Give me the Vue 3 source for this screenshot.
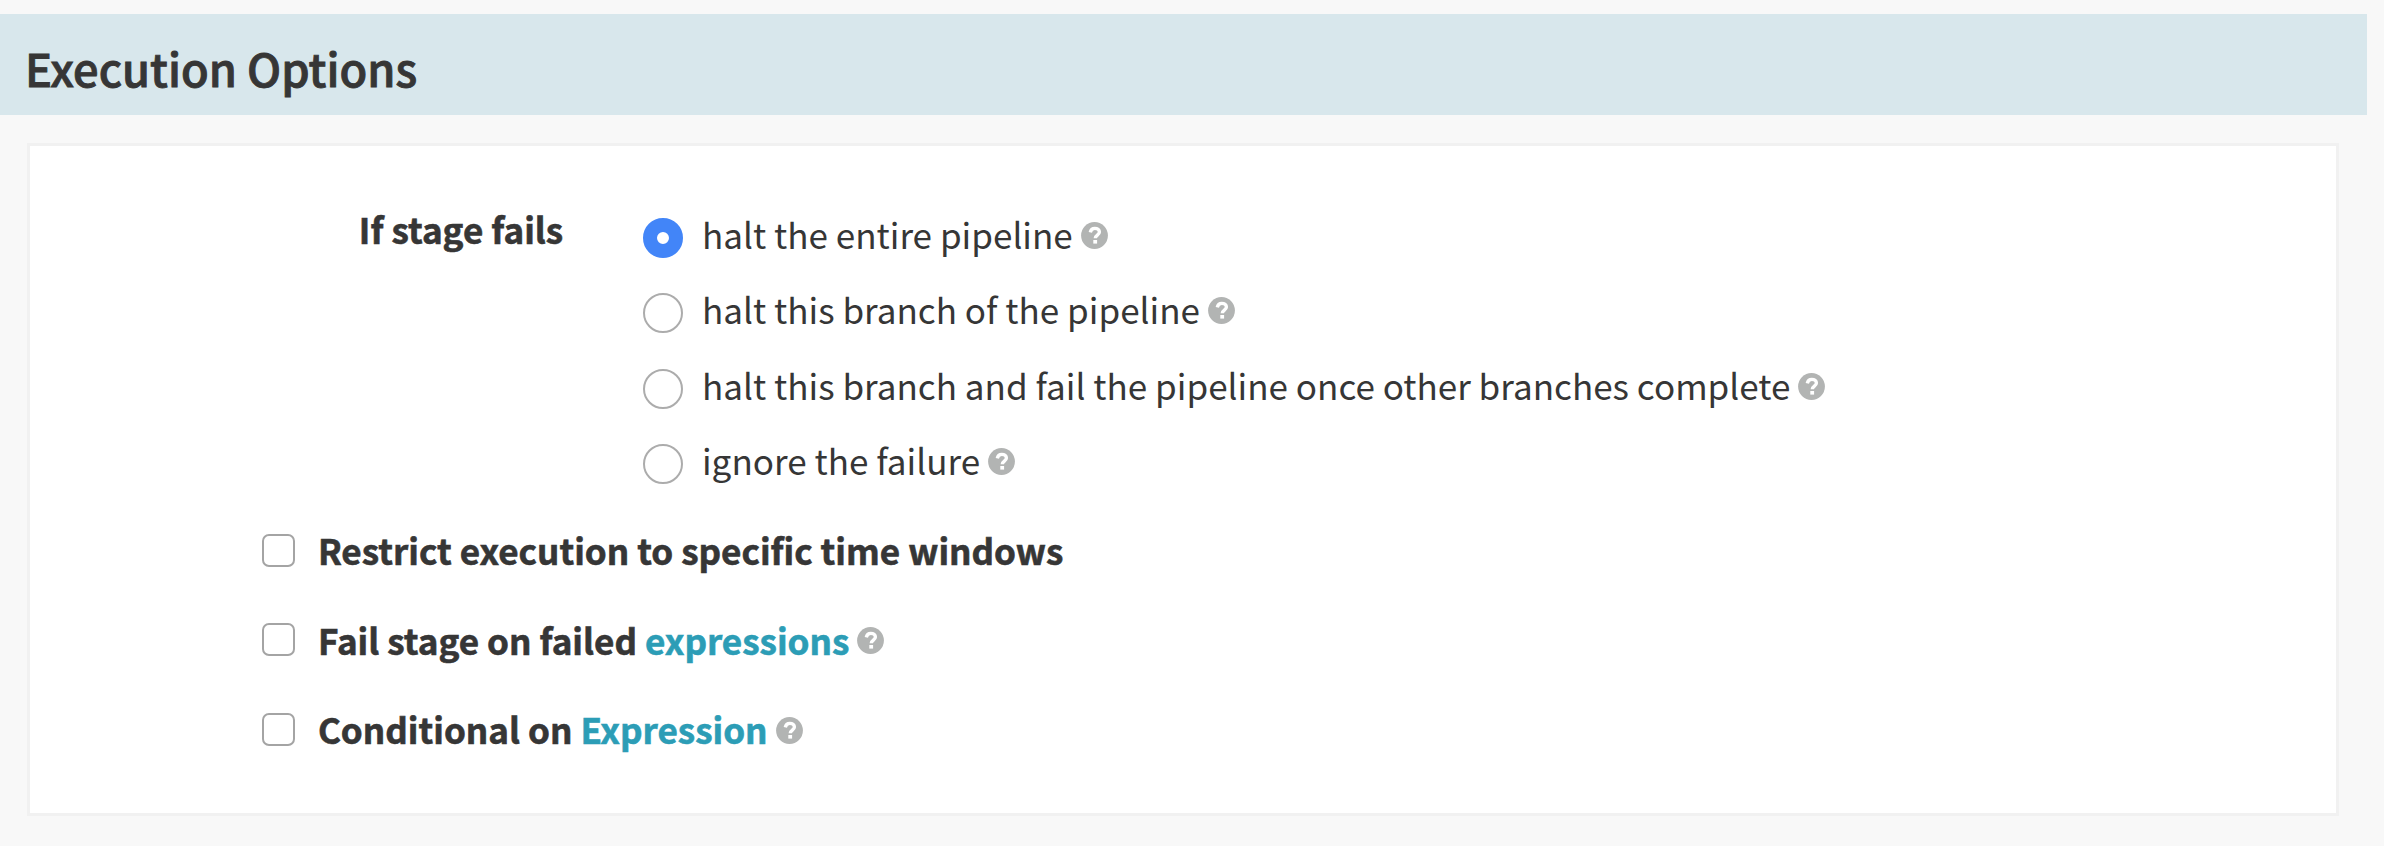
<script setup>
import { ref } from 'vue'

const failureMode = ref(0)
const failureOptions = [
  'halt the entire pipeline',
  'halt this branch of the pipeline',
  'halt this branch and fail the pipeline once other branches complete',
  'ignore the failure',
]
const toggles = ref([
  { label: 'Restrict execution to specific time windows', on: false },
  { label: 'Fail stage on failed ', link: 'expressions', on: false },
  { label: 'Conditional on ', link: 'Expression', on: false },
])
</script>

<template>
  <main class="page">
    <header class="heading"><h2>Execution Options</h2></header>
    <section class="panel">
      <div class="failure">
        <div class="group-label">If stage fails</div>
        <div class="options">
          <label v-for="(text, i) in failureOptions" :key="text" class="option">
            <input v-model="failureMode" class="radio" type="radio" name="failure" :value="i" />
            <span class="text">{{ text }}</span>
            <svg class="help" viewBox="0 0 27 27">
              <circle cx="13.5" cy="13.5" r="13.4" fill="#b2b4b3" />
              <path d="M9.3 10.4C9.8 7.7 11.3 6.4 13.8 6.4c2.7 0 4.6 1.5 4.6 3.7 0 3.1-4.1 3.1-4.1 6.2" fill="none" stroke="#fff" stroke-width="3.4" />
              <rect x="12.3" y="18" width="3.8" height="3.6" fill="#fff" />
            </svg>
          </label>
        </div>
      </div>
      <label v-for="item in toggles" :key="item.label" class="toggle">
        <input v-model="item.on" class="checkbox" type="checkbox" />
        <span class="text">{{ item.label }}<a v-if="item.link">{{ item.link }}</a></span>
        <svg v-if="item.link" class="help" viewBox="0 0 27 27">
          <circle cx="13.5" cy="13.5" r="13.4" fill="#b2b4b3" />
          <path d="M9.3 10.4C9.8 7.7 11.3 6.4 13.8 6.4c2.7 0 4.6 1.5 4.6 3.7 0 3.1-4.1 3.1-4.1 6.2" fill="none" stroke="#fff" stroke-width="3.4" />
          <rect x="12.3" y="18" width="3.8" height="3.6" fill="#fff" />
        </svg>
      </label>
    </section>
  </main>
</template>

<style>
body { background: #fff; }
</style>

<style scoped>
.page {
  box-sizing: border-box;
  width: 2384px;
  height: 846px;
  padding-top: 14px;
  overflow: hidden;
  background: #f8f8f8;
  color: #363636;
  font-family: "Noto Sans CJK SC", "Noto Sans", sans-serif;
  font-size: 35.06px;
}
.heading {
  box-sizing: border-box;
  width: 2367px;
  height: 101px;
  padding-left: 25px;
  background: #d8e7ec;
}
h2 {
  margin: 0;
  padding-top: 3px;
  font-size: 45.2px;
  font-weight: 500;
  line-height: 101px;
  -webkit-text-stroke: 0.9px #363636;
}
.panel {
  box-sizing: border-box;
  width: 2311.5px;
  height: 673px;
  margin: 28px 0 0 27px;
  padding-top: 54px;
  border: 3px solid #f1f1f1;
  background: #fff;
}
.failure { display: flex; height: 305.6px; }
.group-label {
  width: 533.2px;
  font-weight: 700;
  line-height: 57px;
  text-align: right;
  -webkit-text-stroke: 0.6px currentColor;
}
.options { margin-left: 80px; }
.option { display: flex; align-items: center; height: 75.5px; }
.text { white-space: pre; line-height: 60px; }
.option .text { margin: 0 0 8px 18.8px; }
.option .help { margin-bottom: 4.8px; }
.radio, .checkbox { flex: none; box-sizing: border-box; margin: 0; appearance: none; background: #fff; }
.radio { width: 40px; height: 40px; border: 2px solid #acacac; border-radius: 50%; }
.radio:checked { border: 14px solid #4285f8; }
.checkbox { width: 33px; height: 33px; border: 2px solid #a4a4a4; border-radius: 7px; }
.toggle { display: flex; align-items: center; height: 89.4px; margin-left: 231.7px; font-weight: 700; }
.toggle .text { margin: 0 0 0 23.2px; -webkit-text-stroke: 0.6px currentColor; }
.help { flex: none; width: 27px; height: 27px; margin-left: 8px; }
.toggle .help { margin-top: 2px; }
a { color: #2c9db6; -webkit-text-stroke: 0.6px #2c9db6; }
</style>
